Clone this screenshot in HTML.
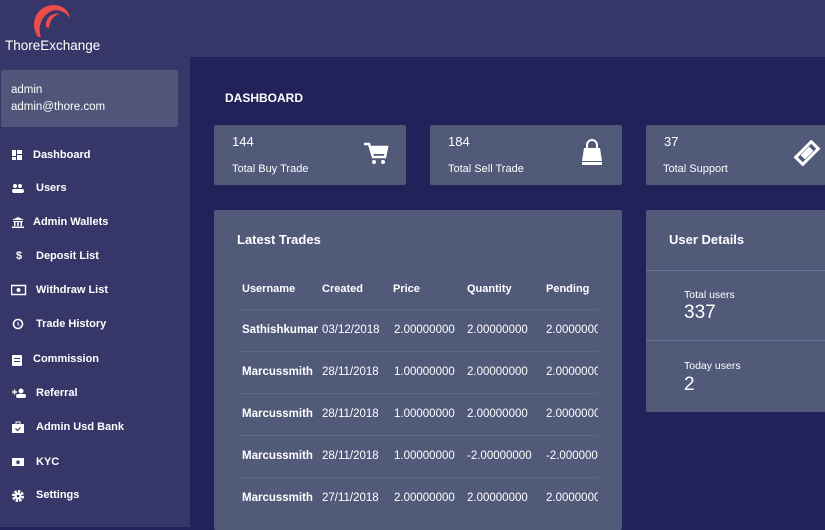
<!DOCTYPE html>
<html><head><meta charset="utf-8"><style>
*{margin:0;padding:0;box-sizing:border-box}
body{width:825px;height:525px;overflow:hidden;background:#23215a;font-family:"Liberation Sans",sans-serif;color:#fff;position:relative}
.a{position:absolute}
.top{left:0;top:0;width:825px;height:57px;background:#373669}
.side{left:0;top:57px;width:190px;height:470px;background:#373669}
.card{background:#525a7a;border-radius:2px}
.nav{position:absolute;left:0;width:190px;height:14px;font-size:11px;font-weight:bold;white-space:nowrap}
.nav svg{position:absolute;left:11px;top:0}
.t{font-size:11px;font-weight:bold;position:absolute}
.line{position:absolute;left:238px;width:360px;height:1px;background:#5f6787}
</style></head><body>
<div class="a top"></div>
<div class="a side"></div>
<svg class="a" style="left:32px;top:2px" width="40" height="36" viewBox="0 0 40 36"><path d="M6 35 C-3 22 4 4 21 3 C31 3 37 9 38 16 C32 8 23 6 16 11 C8 17 6 27 9 35Z" fill="#ee4b4b"/><path d="M14 25 C13 16 20 10 28 12 C23 13 18 17 17 26Z" fill="#ee4b4b"/></svg>
<div class="a" style="left:5px;top:38px;font-size:13.5px">ThoreExchange</div>
<div class="a card" style="left:1px;top:70px;width:177px;height:57px;background:#4f5679"></div>
<div class="a" style="left:11px;top:84px;font-size:11.5px">admin</div>
<div class="a" style="left:11px;top:101px;font-size:11.5px">admin@thore.com</div>

<div class="nav" style="top:149px"><svg width="12" height="12"><rect x="1" y="1" width="4" height="6" fill="#fff"/><rect x="6" y="1" width="5" height="4" fill="#fff"/><rect x="1" y="8" width="4" height="3" fill="#fff"/><rect x="6" y="6" width="5" height="5" fill="#fff"/></svg><span style="position:absolute;left:33px">Dashboard</span></div>
<div class="nav" style="top:182px"><svg width="14" height="12"><circle cx="4" cy="4" r="2" fill="#fff"/><circle cx="9" cy="4" r="2" fill="#fff"/><rect x="1" y="7" width="12" height="4" rx="2" fill="#fff"/></svg><span style="position:absolute;left:36px">Users</span></div>
<div class="nav" style="top:216px"><svg width="14" height="12"><path d="M1 4 L7 1 L13 4Z M2 5h10v1H2z M3 6h1.5v4H3z M6.2 6h1.5v4H6.2z M9.5 6H11v4H9.5z M1 10.5h12V12H1z" fill="#fff"/></svg><span style="position:absolute;left:33px">Admin Wallets</span></div>
<div class="nav" style="top:250px"><span style="position:absolute;left:16px">$</span><span style="position:absolute;left:36px">Deposit List</span></div>
<div class="nav" style="top:284px"><svg width="16" height="12"><rect x="0.5" y="1.5" width="14" height="9" fill="none" stroke="#fff" stroke-width="1.5"/><circle cx="7.5" cy="6" r="2" fill="#fff"/></svg><span style="position:absolute;left:36px">Withdraw List</span></div>
<div class="nav" style="top:318px"><svg width="14" height="12"><circle cx="7" cy="6" r="4.5" fill="none" stroke="#fff" stroke-width="1.6"/><path d="M7 4v2.5l1.5 1" stroke="#fff" fill="none"/></svg><span style="position:absolute;left:36px">Trade History</span></div>
<div class="nav" style="top:353px"><svg width="12" height="14"><rect x="1" y="2" width="10" height="11" rx="1" fill="#fff"/><rect x="3" y="5" width="6" height="1" fill="#373669"/><rect x="3" y="8" width="6" height="1" fill="#373669"/></svg><span style="position:absolute;left:33px">Commission</span></div>
<div class="nav" style="top:387px"><svg width="16" height="12"><circle cx="10" cy="4" r="2.5" fill="#fff"/><rect x="5" y="7" width="10" height="4" rx="2" fill="#fff"/><path d="M1 5h5M3.5 2.5v5" stroke="#fff" stroke-width="1.5"/></svg><span style="position:absolute;left:36px">Referral</span></div>
<div class="nav" style="top:421px"><svg width="14" height="13"><rect x="1" y="3" width="12" height="9" fill="#fff"/><rect x="5" y="1" width="4" height="3" fill="none" stroke="#fff"/><path d="M4.5 7.5l2 2 3-3" stroke="#373669" fill="none" stroke-width="1.2"/></svg><span style="position:absolute;left:36px">Admin Usd Bank</span></div>
<div class="nav" style="top:456px"><svg width="14" height="12"><rect x="1" y="2" width="12" height="8" fill="#fff"/><path d="M7 3.5l.8 1.8 1.8.2-1.4 1.2.4 1.8L7 7.6 5.4 8.5l.4-1.8-1.4-1.2 1.8-.2z" fill="#373669"/></svg><span style="position:absolute;left:36px">KYC</span></div>
<div class="nav" style="top:489px"><svg width="14" height="14"><circle cx="7" cy="7" r="4.5" fill="none" stroke="#fff" stroke-width="3" stroke-dasharray="2.3 1.2"/><circle cx="7" cy="7" r="3.5" fill="#fff"/><circle cx="7" cy="7" r="1.3" fill="#373669"/></svg><span style="position:absolute;left:36px">Settings</span></div>

<div class="a" style="left:225px;top:91px;font-size:12px;font-weight:bold">DASHBOARD</div>

<div class="a card" style="left:214px;top:125px;width:192px;height:60px"></div>
<div class="a" style="left:232px;top:134px;font-size:13px">144</div>
<div class="a" style="left:232px;top:163px;font-size:11px">Total Buy Trade</div>
<svg class="a" style="left:363px;top:142px" width="26" height="24" viewBox="0 0 26 24"><path d="M1 2h5l4 13h12l2-10H8" fill="none" stroke="#fff" stroke-width="2.5"/><rect x="8" y="5" width="15" height="7" fill="#fff"/><circle cx="11" cy="20" r="2" fill="#fff"/><circle cx="20" cy="20" r="2" fill="#fff"/></svg>

<div class="a card" style="left:430px;top:125px;width:192px;height:60px"></div>
<div class="a" style="left:448px;top:134px;font-size:13px">184</div>
<div class="a" style="left:448px;top:163px;font-size:11px">Total Sell Trade</div>
<svg class="a" style="left:578px;top:139px" width="28" height="28" viewBox="0 0 28 28"><path d="M9 11V6a5 5 0 0 1 10 0v5" fill="none" stroke="#fff" stroke-width="2"/><path d="M6 9h16l2 13H4z" fill="#fff"/><rect x="4" y="23" width="20" height="3" fill="#fff"/></svg>

<div class="a card" style="left:646px;top:125px;width:180px;height:60px"></div>
<div class="a" style="left:664px;top:134px;font-size:13px">37</div>
<div class="a" style="left:663px;top:163px;font-size:11px">Total Support</div>
<svg class="a" style="left:793px;top:140px" width="28" height="26" viewBox="0 0 28 26"><g transform="rotate(-45 14 13)"><rect x="3" y="8" width="22" height="10" fill="none" stroke="#fff" stroke-width="3"/><rect x="8" y="10" width="12" height="6" fill="#fff"/></g></svg>

<div class="a card" style="left:214px;top:210px;width:408px;height:320px"></div>
<div class="a" style="left:237px;top:232px;font-size:13px;font-weight:bold">Latest Trades</div>
<div class="t" style="left:242px;top:283px">Username</div>
<div class="t" style="left:322px;top:283px">Created</div>
<div class="t" style="left:393px;top:283px">Price</div>
<div class="t" style="left:467px;top:283px">Quantity</div>
<div class="t" style="left:546px;top:283px">Pending</div>
<div class="line" style="top:309px"></div><div class="line" style="top:351px"></div><div class="line" style="top:393px"></div><div class="line" style="top:435px"></div><div class="line" style="top:477px"></div>
<div class="a" style="left:242px;top:324px;width:356px;height:200px;overflow:hidden;font-size:11.5px;line-height:42px">
<div style="position:absolute;left:0;top:-15px;white-space:nowrap;font-weight:bold">Sathishkumar<br>Marcussmith<br>Marcussmith<br>Marcussmith<br>Marcussmith</div>
<div style="position:absolute;left:80px;top:-15px;white-space:nowrap">03/12/2018<br>28/11/2018<br>28/11/2018<br>28/11/2018<br>27/11/2018</div>
<div style="position:absolute;left:152px;top:-15px;white-space:nowrap">2.00000000<br>1.00000000<br>1.00000000<br>1.00000000<br>2.00000000</div>
<div style="position:absolute;left:225px;top:-15px;white-space:nowrap">2.00000000<br>2.00000000<br>2.00000000<br>-2.00000000<br>2.00000000</div>
<div style="position:absolute;left:304px;top:-15px;white-space:nowrap">2.00000000<br>2.00000000<br>2.00000000<br>-2.00000000<br>2.00000000</div>
</div>

<div class="a card" style="left:646px;top:210px;width:180px;height:202px"></div>
<div class="a" style="left:669px;top:232px;font-size:13px;font-weight:bold">User Details</div>
<div class="a" style="left:646px;top:270px;width:180px;height:1px;background:#6a7192"></div>
<div class="a" style="left:646px;top:340px;width:180px;height:1px;background:#6a7192"></div>
<div class="a" style="left:684px;top:289px;font-size:10.5px">Total users</div>
<div class="a" style="left:684px;top:302px;font-size:19px">337</div>
<div class="a" style="left:684px;top:360px;font-size:10.5px">Today users</div>
<div class="a" style="left:684px;top:374px;font-size:19px">2</div>
</body></html>
